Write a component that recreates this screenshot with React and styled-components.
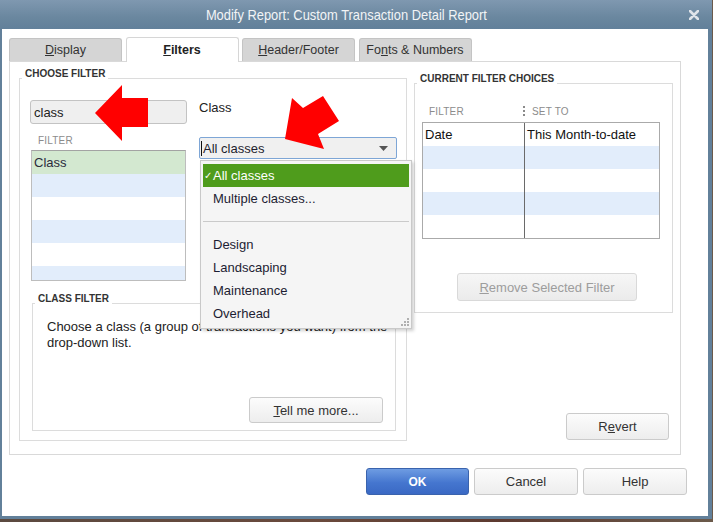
import React from 'react';
import styled, { createGlobalStyle, css } from 'styled-components';

const GlobalStyle = createGlobalStyle`
  html, body {
    margin: 0;
    padding: 0;
  }
  body {
    width: 713px;
    height: 522px;
    overflow: hidden;
    background: linear-gradient(90deg, #5b4a40 0%, #6a4a3c 45%, #5d3a30 70%, #6b5a4b 100%);
    font-family: "Liberation Sans", Arial, sans-serif;
    font-size: 13px;
    color: #222;
  }
`;

const Window = styled.div`
  position: relative;
  width: 712px;
  height: 519px;
  background: #62809a;
  display: flex;
  flex-direction: column;
`;

const TitleBar = styled.div`
  height: 29px;
  flex: none;
  display: flex;
  align-items: center;
  justify-content: center;
  padding-right: 20px;
  background: linear-gradient(#7f98b0, #6a879f 60%, #62809a);
  position: relative;
`;

const TitleText = styled.span`
  display: inline-block;
  transform: scaleX(0.86);
  color: #f2f4f6;
  font-size: 15px;
  white-space: nowrap;
`;

const CloseIcon = styled.svg`
  position: absolute;
  right: 13px;
  top: 10px;
`;

const Client = styled.div`
  flex: 1;
  margin: 0 4px 3px 2px;
  background: #fff;
  display: flex;
  flex-direction: column;
  align-items: flex-start;
  padding: 8px 21px 0 7px;
`;

const TabStrip = styled.div`
  display: flex;
  align-items: flex-end;
  gap: 3.5px;
  height: 24px;
`;

const Tab = styled.div`
  position: relative;
  box-sizing: border-box;
  width: 113px;
  height: 23px;
  display: flex;
  align-items: center;
  justify-content: center;
  background: #d5d5d5;
  border: 1px solid #c4c4c4;
  border-bottom: none;
  border-radius: 3px 3px 0 0;
  font-size: 12.5px;
  color: #333;
  ${({ $active }) => $active && css`
    height: 25px;
    margin-bottom: -1px;
    z-index: 1;
    background: #fff;
    border-color: #d6d6d6;
    font-weight: bold;
    color: #222;
  `}
`;

const Panel = styled.div`
  box-sizing: border-box;
  width: 672px;
  height: 394px;
  border: 1px solid #d9d9d9;
  display: flex;
  gap: 7px;
  padding: 16px 7px 13px 9px;
`;

const GroupBox = styled.div`
  position: relative;
  box-sizing: border-box;
  border: 1px solid #dcdcdc;
`;

const GroupTitle = styled.div`
  position: absolute;
  top: -11px;
  left: 2px;
  padding: 0 3px;
  background: #fff;
  font-size: 10px;
  line-height: 12px;
  font-weight: bold;
  color: #333;
`;

const ChooseBox = styled(GroupBox)`
  width: 388px;
  padding: 21px 10px 9px 10px;
  display: flex;
  flex-direction: column;
`;

const TopRow = styled.div`
  display: flex;
  gap: 12px;
`;

const Column = styled.div`
  display: flex;
  flex-direction: column;
  width: ${({ $w }) => $w}px;
`;

const SearchInput = styled.input`
  box-sizing: border-box;
  width: 157px;
  height: 24px;
  border: 1px solid #c3c3c3;
  border-radius: 3px;
  background: #efefef;
  padding: 0 0 0 3px;
  font: 13px "Liberation Sans", Arial, sans-serif;
  color: #222;
  outline: none;
`;

const ColumnLabel = styled.div`
  font-size: 10px;
  line-height: 12px;
  color: #8c8c8c;
  letter-spacing: 0.2px;
  padding-left: ${({ $pad }) => $pad || 0}px;
`;

const ListHeading = styled(ColumnLabel)`
  margin-top: 11px;
`;

const FilterList = styled.div`
  box-sizing: border-box;
  margin: 3px 0 0 1px;
  width: 155px;
  height: 131px;
  border: 1px solid #bdbdbd;
  border-top-color: #a3a3a3;
  overflow: hidden;
`;

const ListRow = styled.div`
  height: 23px;
  line-height: 23px;
  padding-left: 2px;
  font-size: 13px;
  color: #2b2b3c;
  background: ${({ $tone }) =>
    $tone === 'selected' ? '#d3e8d0' : $tone === 'blue' ? '#e2edfb' : '#fff'};
`;

const FieldLabel = styled.div`
  line-height: 15px;
  color: #222;
`;

const DropdownWrap = styled.div`
  position: relative;
  margin-top: 22px;
`;

const Select = styled.div`
  box-sizing: border-box;
  width: 198px;
  height: 22px;
  display: flex;
  align-items: center;
  padding: 0 8px 0 1px;
  border: 1px solid #7ea6d6;
  border-radius: 2px;
  background: #f0f0f0;
  color: #1e1e2e;
`;

const Caret = styled.span`
  width: 1px;
  height: 15px;
  background: #111;
  margin-right: 1px;
`;

const SelectText = styled.span`
  flex: 1;
`;

const Menu = styled.div`
  position: absolute;
  top: calc(100% + 1px);
  left: 1px;
  z-index: 10;
  box-sizing: border-box;
  width: 212px;
  padding: 3px 2px;
  background: #f5f5f5;
  border: 1px solid #c9c9c9;
  box-shadow: 2px 2px 3px rgba(0, 0, 0, 0.18);
`;

const MenuItem = styled.div`
  height: 23px;
  display: flex;
  align-items: center;
  padding-left: 1px;
  color: #1d1d33;
  ${({ $active }) => $active && css`
    background: #4f9c1c;
    color: #fff;
  `}
`;

const Check = styled.span`
  width: 9px;
  font-size: 10px;
  line-height: 10px;
`;

const MenuSeparator = styled.div`
  height: 23px;
  display: flex;
  align-items: center;
  &::after {
    content: '';
    flex: 1;
    height: 1px;
    margin-top: -1px;
    background: #cacaca;
  }
`;

const Grip = styled.svg`
  position: absolute;
  right: 2px;
  bottom: 2px;
`;

const ClassBox = styled(GroupBox)`
  flex: none;
  margin: 22px 0 0 2px;
  width: 364px;
  height: 128px;
  display: flex;
  flex-direction: column;
  padding: 15px 12px 7px 14px;
`;

const HelpText = styled.p`
  margin: 0;
  line-height: 16px;
  color: #222;
  white-space: nowrap;
`;

const Button = styled.button`
  box-sizing: border-box;
  width: ${({ $w }) => $w}px;
  height: ${({ $h }) => $h || 27}px;
  padding: 0;
  font: 13px "Liberation Sans", Arial, sans-serif;
  color: #333;
  background: linear-gradient(#fcfcfc, #ededed);
  border: 1px solid #cbcbcb;
  border-radius: 3px;
  ${({ $primary }) => $primary && css`
    color: #fff;
    font-weight: bold;
    font-size: 12px;
    background: linear-gradient(#6e9ce2, #4576cf 55%, #3a69c4);
    border-color: #3a63ad;
  `}
  ${({ disabled }) => disabled && css`
    color: #9d9d9d;
    background: linear-gradient(#f6f6f6, #ebebeb);
    border-color: #d9d9d9;
  `}
`;

const TellMore = styled(Button)`
  margin-top: auto;
  align-self: flex-end;
`;

const RightColumn = styled.div`
  width: 259px;
  display: flex;
  flex-direction: column;
  padding-top: 5px;
`;

const CurrentBox = styled(GroupBox)`
  height: 230px;
  padding: 22px 12px 0 7px;
`;

const TableHead = styled.div`
  height: 16px;
  display: flex;
  align-items: flex-start;
`;

const HeadCell = styled.div`
  width: ${({ $w }) => ($w ? `${$w}px` : 'auto')};
  display: flex;
`;

const HeadDots = styled.span`
  width: 2px;
  height: 10px;
  margin: 0 7px 0 0;
  background: repeating-linear-gradient(#8a8a8a 0 2px, transparent 2px 4px);
`;

const ChoiceTable = styled.div`
  box-sizing: border-box;
  width: 238px;
  border: 1px solid #aaa;
`;

const ChoiceRow = styled.div`
  display: flex;
  height: 23px;
  background: ${({ $blue }) => ($blue ? '#e2edfb' : '#fff')};
`;

const ChoiceCell = styled.div`
  box-sizing: border-box;
  width: ${({ $w }) => ($w ? `${$w}px` : 'auto')};
  flex: ${({ $w }) => ($w ? 'none' : 1)};
  line-height: 23px;
  padding-left: 2px;
  color: #111;
  ${({ $divider }) => $divider && css`border-left: 1px solid #6a6a6a;`}
`;

const RemoveButton = styled(Button)`
  margin: 34px 0 0 35px;
`;

const RevertButton = styled(Button)`
  margin: auto 4px 1px 0;
  align-self: flex-end;
`;

const ButtonRow = styled.div`
  align-self: flex-end;
  display: flex;
  gap: 5px;
  margin-top: 13px;
`;

const Annotations = styled.svg`
  position: absolute;
  left: 0;
  top: 0;
  z-index: 20;
  pointer-events: none;
`;

const tabs = [
  { key: 'display', label: <><u>D</u>isplay</> },
  { key: 'filters', label: <><u>F</u>ilters</>, active: true },
  { key: 'header', label: <><u>H</u>eader/Footer</> },
  { key: 'fonts', label: <>Fo<u>n</u>ts &amp; Numbers</> },
];

const listTones = ['selected', 'blue', 'white', 'blue', 'white', 'blue'];

const classOptions = ['Design', 'Landscaping', 'Maintenance', 'Overhead'];

const choices = [
  { filter: 'Date', setTo: 'This Month-to-date' },
  {}, {}, {}, {},
];

export default function App() {
  return (
    <>
      <GlobalStyle />
      <Window>
        <TitleBar>
          <TitleText>Modify Report: Custom Transaction Detail Report</TitleText>
          <CloseIcon width="10" height="10" viewBox="0 0 10 10">
            <path d="M1 1 L9 9 M9 1 L1 9" stroke="#dfe4ea" strokeWidth="2.6" strokeLinecap="round" />
          </CloseIcon>
        </TitleBar>

        <Client>
          <TabStrip>
            {tabs.map((t) => (
              <Tab key={t.key} $active={t.active}>{t.label}</Tab>
            ))}
          </TabStrip>

          <Panel>
            <ChooseBox>
              <GroupTitle>CHOOSE FILTER</GroupTitle>
              <TopRow>
                <Column $w={157}>
                  <SearchInput readOnly value="class" />
                  <ListHeading $pad={8}>FILTER</ListHeading>
                  <FilterList>
                    {listTones.map((tone, i) => (
                      <ListRow key={i} $tone={tone}>{i === 0 ? 'Class' : ''}</ListRow>
                    ))}
                  </FilterList>
                </Column>

                <Column $w={198}>
                  <FieldLabel>Class</FieldLabel>
                  <DropdownWrap>
                    <Select>
                      <Caret />
                      <SelectText>All classes</SelectText>
                      <svg width="9" height="5" viewBox="0 0 9 5">
                        <path d="M0 0 H9 L4.5 5 Z" fill="#555" />
                      </svg>
                    </Select>
                    <Menu>
                      <MenuItem $active><Check>✓</Check>All classes</MenuItem>
                      <MenuItem><Check />Multiple classes...</MenuItem>
                      <MenuSeparator />
                      {classOptions.map((name) => (
                        <MenuItem key={name}><Check />{name}</MenuItem>
                      ))}
                      <Grip width="8" height="8" viewBox="0 0 8 8">
                        <g fill="#b0b0b0">
                          <rect x="6" y="0" width="2" height="2" />
                          <rect x="3" y="3" width="2" height="2" />
                          <rect x="6" y="3" width="2" height="2" />
                          <rect x="0" y="6" width="2" height="2" />
                          <rect x="3" y="6" width="2" height="2" />
                          <rect x="6" y="6" width="2" height="2" />
                        </g>
                      </Grip>
                    </Menu>
                  </DropdownWrap>
                </Column>
              </TopRow>

              <ClassBox>
                <GroupTitle>CLASS FILTER</GroupTitle>
                <HelpText>
                  Choose a class (a group of transactions you want) from the
                  <br />
                  drop-down list.
                </HelpText>
                <TellMore $w={134} $h={26}><u>T</u>ell me more...</TellMore>
              </ClassBox>
            </ChooseBox>

            <RightColumn>
              <CurrentBox>
                <GroupTitle>CURRENT FILTER CHOICES</GroupTitle>
                <TableHead>
                  <HeadCell $w={101}>
                    <ColumnLabel $pad={7}>FILTER</ColumnLabel>
                  </HeadCell>
                  <HeadCell>
                    <HeadDots />
                    <ColumnLabel>SET TO</ColumnLabel>
                  </HeadCell>
                </TableHead>
                <ChoiceTable>
                  {choices.map((c, i) => (
                    <ChoiceRow key={i} $blue={i % 2 === 1}>
                      <ChoiceCell $w={101}>{c.filter}</ChoiceCell>
                      <ChoiceCell $divider>{c.setTo}</ChoiceCell>
                    </ChoiceRow>
                  ))}
                </ChoiceTable>
                <RemoveButton $w={180} $h={28} disabled>
                  <u>R</u>emove Selected Filter
                </RemoveButton>
              </CurrentBox>
              <RevertButton $w={103}>R<u>e</u>vert</RevertButton>
            </RightColumn>
          </Panel>

          <ButtonRow>
            <Button $w={103} $primary>OK</Button>
            <Button $w={104}>Cancel</Button>
            <Button $w={104}>Help</Button>
          </ButtonRow>
        </Client>

        <Annotations width="713" height="522" viewBox="0 0 713 522">
          <g fill="#ff0000">
            <polygon points="95,113 122,85 122,98 148,98 148,127 122,127 122,141" />
            <polygon points="285,139 292,98 303,108 323,96 339,121 318,134 324,149" />
          </g>
        </Annotations>
      </Window>
    </>
  );
}
